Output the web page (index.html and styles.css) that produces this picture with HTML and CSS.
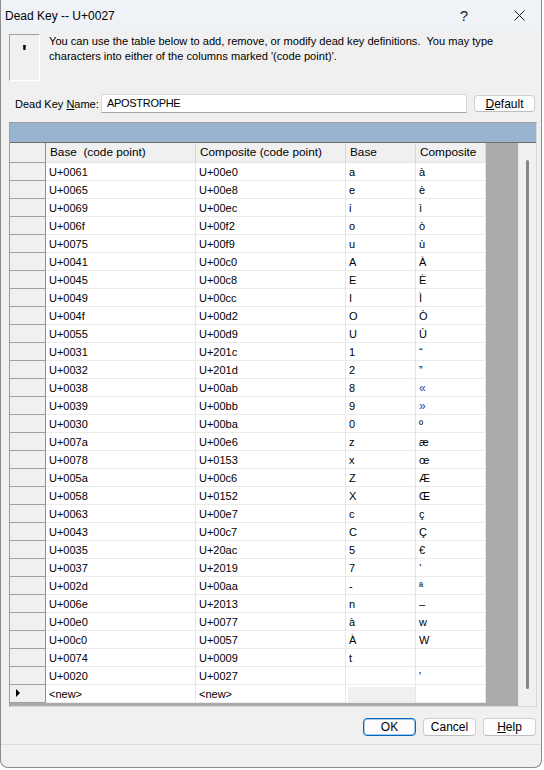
FILE: index.html
```html
<!DOCTYPE html>
<html>
<head>
<meta charset="utf-8">
<title>Dead Key -- U+0027</title>
<link rel="stylesheet" href="styles.css">
</head>
<body>
<div class="window">
  <div class="titlebar">
    <div class="title">Dead Key -- U+0027</div>
    <div class="tb-btn tb-help">?</div>
    <div class="tb-btn tb-close">
      <svg width="11" height="11" viewBox="0 0 11 11"><path d="M0.5 0.5 L10.5 10.5 M10.5 0.5 L0.5 10.5" stroke="#1b1b1b" stroke-width="1" fill="none"/></svg>
    </div>
  </div>
  <div class="body">
    <div class="intro">
      <div class="keybox"><span class="keychar">'</span></div>
      <div class="desc">You can use the table below to add, remove, or modify dead key definitions.&nbsp; You may type<br>characters into either of the columns marked '(code point)'.</div>
    </div>
    <div class="namerow">
      <label class="namelabel">Dead Key <u>N</u>ame:</label>
      <div class="nameinput">APOSTROPHE</div>
      <div class="btn btn-default"><u>D</u>efault</div>
    </div>
    <div class="panel">
      <div class="caption"></div>
      <div class="panel-body">
        <div class="grid-area">
          <div class="grid">
            <div class="hc corner"></div><div class="hc">Base&nbsp; (code point)</div><div class="hc">Composite (code point)</div><div class="hc">Base</div><div class="hc">Composite</div>
            <div class="rh"></div><div class="c">U+0061</div><div class="c">U+00e0</div><div class="c">a</div><div class="c">à</div>
            <div class="rh"></div><div class="c">U+0065</div><div class="c">U+00e8</div><div class="c">e</div><div class="c">è</div>
            <div class="rh"></div><div class="c">U+0069</div><div class="c">U+00ec</div><div class="c">i</div><div class="c">ì</div>
            <div class="rh"></div><div class="c">U+006f</div><div class="c">U+00f2</div><div class="c">o</div><div class="c">ò</div>
            <div class="rh"></div><div class="c">U+0075</div><div class="c">U+00f9</div><div class="c">u</div><div class="c">ù</div>
            <div class="rh"></div><div class="c">U+0041</div><div class="c">U+00c0</div><div class="c">A</div><div class="c">À</div>
            <div class="rh"></div><div class="c">U+0045</div><div class="c">U+00c8</div><div class="c">E</div><div class="c">È</div>
            <div class="rh"></div><div class="c">U+0049</div><div class="c">U+00cc</div><div class="c">I</div><div class="c">Ì</div>
            <div class="rh"></div><div class="c">U+004f</div><div class="c">U+00d2</div><div class="c">O</div><div class="c">Ò</div>
            <div class="rh"></div><div class="c">U+0055</div><div class="c">U+00d9</div><div class="c">U</div><div class="c">Ù</div>
            <div class="rh"></div><div class="c">U+0031</div><div class="c">U+201c</div><div class="c">1</div><div class="c">“</div>
            <div class="rh"></div><div class="c">U+0032</div><div class="c">U+201d</div><div class="c">2</div><div class="c">”</div>
            <div class="rh"></div><div class="c">U+0038</div><div class="c">U+00ab</div><div class="c">8</div><div class="c blue">«</div>
            <div class="rh"></div><div class="c">U+0039</div><div class="c">U+00bb</div><div class="c">9</div><div class="c blue">»</div>
            <div class="rh"></div><div class="c">U+0030</div><div class="c">U+00ba</div><div class="c">0</div><div class="c">º</div>
            <div class="rh"></div><div class="c">U+007a</div><div class="c">U+00e6</div><div class="c">z</div><div class="c">æ</div>
            <div class="rh"></div><div class="c">U+0078</div><div class="c">U+0153</div><div class="c">x</div><div class="c">œ</div>
            <div class="rh"></div><div class="c">U+005a</div><div class="c">U+00c6</div><div class="c">Z</div><div class="c">Æ</div>
            <div class="rh"></div><div class="c">U+0058</div><div class="c">U+0152</div><div class="c">X</div><div class="c">Œ</div>
            <div class="rh"></div><div class="c">U+0063</div><div class="c">U+00e7</div><div class="c">c</div><div class="c">ç</div>
            <div class="rh"></div><div class="c">U+0043</div><div class="c">U+00c7</div><div class="c">C</div><div class="c">Ç</div>
            <div class="rh"></div><div class="c">U+0035</div><div class="c">U+20ac</div><div class="c">5</div><div class="c">€</div>
            <div class="rh"></div><div class="c">U+0037</div><div class="c">U+2019</div><div class="c">7</div><div class="c">’</div>
            <div class="rh"></div><div class="c">U+002d</div><div class="c">U+00aa</div><div class="c">-</div><div class="c">ª</div>
            <div class="rh"></div><div class="c">U+006e</div><div class="c">U+2013</div><div class="c">n</div><div class="c">–</div>
            <div class="rh"></div><div class="c">U+00e0</div><div class="c">U+0077</div><div class="c">à</div><div class="c">w</div>
            <div class="rh"></div><div class="c">U+00c0</div><div class="c">U+0057</div><div class="c">À</div><div class="c">W</div>
            <div class="rh"></div><div class="c">U+0074</div><div class="c">U+0009</div><div class="c">t</div><div class="c"></div>
            <div class="rh"></div><div class="c">U+0020</div><div class="c">U+0027</div><div class="c"></div><div class="c">'</div>
            <div class="rh current"><span class="arrow"></span></div><div class="c">&lt;new&gt;</div><div class="c">&lt;new&gt;</div><div class="c newbase"><span class="newbox"></span></div><div class="c"></div>
          </div>
        </div>
        <div class="vscroll"><div class="thumb"></div></div>
      </div>
    </div>
    <div class="buttons">
      <div class="btn btn-ok">OK</div>
      <div class="btn">Cancel</div>
      <div class="btn"><u>H</u>elp</div>
    </div>
    <div class="sep"></div>
  </div>
</div>
</body>
</html>
```

FILE: styles.css
```css
html, body {
  margin: 0;
  padding: 0;
  background: #ffffff;
}
body {
  font-family: "Liberation Sans", Arial, sans-serif;
  font-size: 12px;
  color: #000;
}
.window {
  width: 540px;
  height: 767px;
  border-left: 1px solid #8c8c8c;
  border-right: 1px solid #8c8c8c;
  border-bottom: 1px solid #8c8c8c;
  border-radius: 0 0 8px 8px;
  background: #f0f0f0;
  overflow: hidden;
  display: flex;
  flex-direction: column;
}
.titlebar {
  height: 30px;
  flex: none;
  display: flex;
  align-items: center;
  background: #eff3f8;
}
.title {
  flex: 1;
  padding-left: 4px;
  padding-top: 1px;
  font-size: 12px;
}
.tb-btn {
  width: 46px;
  height: 30px;
  display: flex;
  align-items: center;
  justify-content: center;
}
.tb-help {
  font-size: 15px;
  color: #1b1b1b;
  margin-right: 10px;
}
.tb-close {
  width: 44px;
}
.body {
  flex: 1;
  display: flex;
  flex-direction: column;
}
.intro {
  display: flex;
  padding: 4px 0 0 8px;
}
.keybox {
  width: 29px;
  border-top: 1px solid #a0a0a0;
  border-left: 1px solid #a0a0a0;
  border-right: 1px solid #ffffff;
  border-bottom: 1px solid #ffffff;
  display: flex;
  justify-content: center;
  padding-top: 8px;
  box-sizing: content-box;
  height: 37px;
}
.keychar {
  font-weight: bold;
  font-size: 20px;
  line-height: 19px;
  color: #000;
}
.desc {
  margin-left: 9px;
  line-height: 15px;
  white-space: nowrap;
  font-size: 11.1px;
}
.namerow {
  display: flex;
  align-items: center;
  margin-top: 13px;
  height: 19px;
  padding-left: 14px;
}
.namelabel {
  width: 86px;
  flex: none;
  white-space: nowrap;
  font-size: 11px;
}
.nameinput {
  width: 359px;
  height: 17px;
  border: 1px solid #dadada;
  border-bottom-color: #a8a8a8;
  background: #ffffff;
  font-size: 11px;
  line-height: 17px;
  padding-left: 5px;
  letter-spacing: -0.3px;
}
.btn {
  width: 51px;
  height: 16px;
  border: 1px solid #d0d0d0;
  border-bottom-color: #bdbdbd;
  border-radius: 4px;
  background: #fdfdfd;
  display: flex;
  align-items: center;
  justify-content: center;
  font-size: 12px;
}
.btn-default {
  margin-left: 7px;
  width: 59px;
  height: 15px;
}
.panel {
  margin-top: 9px;
  margin-left: 8px;
  width: 526px;
  border: 1px solid #a0a0a0;
  border-right-color: #d8d8d8;
  border-bottom-color: #d8d8d8;
}
.caption {
  height: 19px;
  background: #99b4d1;
  border-bottom: 1px solid #6e6e6e;
}
.panel-body {
  display: flex;
  height: 563px;
}
.grid-area {
  width: 508px;
  background: #ababab;
}
.grid {
  display: grid;
  grid-template-columns: 36px 150px 150px 70px 70px;
  grid-template-rows: 20px repeat(30, 18px);
  background: #ffffff;
  width: 476px;
}
.grid > div {
  box-sizing: border-box;
  white-space: nowrap;
  overflow: hidden;
}
.hc {
  background: #f0f0f0;
  border-right: 1px solid #d6d6d6;
  border-bottom: 1px solid #e3e3e3;
  padding-left: 4px;
  line-height: 19px;
  font-size: 11.8px;
}
.hc.corner {
  border-right: 1px solid #8f8f8f;
  border-bottom: 1px solid #a0a0a0;
}
.rh {
  background: #f0f0f0;
  border-right: 1px solid #8f8f8f;
  border-bottom: 1px solid #a0a0a0;
  position: relative;
}
.c {
  border-right: 1px solid #e6e6e6;
  border-bottom: 1px solid #ebebeb;
  padding-left: 3px;
  font-size: 11px;
  line-height: 18px;
}
.blue {
  color: #2a4db5;
  font-size: 12px;
}
.arrow {
  position: absolute;
  left: 6px;
  top: 4px;
  width: 0;
  height: 0;
  border-top: 4px solid transparent;
  border-bottom: 4px solid transparent;
  border-left: 4px solid #000;
}
.newbase {
  padding: 2px 0 0 2px;
}
.newbox {
  display: block;
  height: 15px;
  background: #f0f0f0;
}
.vscroll {
  width: 18px;
  background: #f0f0f0;
  border-left: 1px solid #e4e4e4;
  box-sizing: border-box;
  padding: 17px 0 0 7px;
}
.thumb {
  width: 3px;
  height: 529px;
  border-radius: 2px;
  background: #878787;
}
.buttons {
  display: flex;
  justify-content: flex-end;
  gap: 7px;
  margin-top: 11px;
  padding-right: 5px;
}
.btn-ok {
  border-color: #0067c0;
  box-shadow: inset 0 0 0 1px rgba(0, 103, 192, 0.35);
}
.sep {
  margin-top: 8px;
  height: 1px;
  background: #dcdcdc;
}
```
